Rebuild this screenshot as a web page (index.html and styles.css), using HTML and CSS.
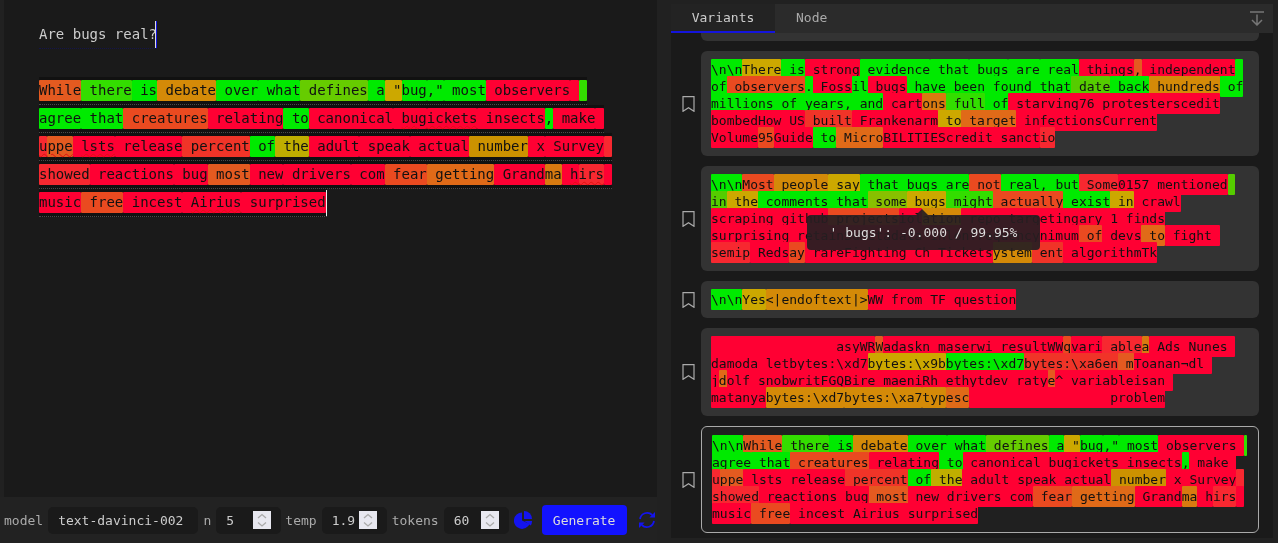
FILE: index.html
```html
<!DOCTYPE html>
<html lang="en">
<head>
<meta charset="utf-8">
<title>Are bugs real?</title>
<link rel="stylesheet" href="styles.css">
</head>
<body>
<div class="app">
  <section class="left">
    <div class="editor">
      <div class="prompt">Are bugs real?<i class="caret"></i></div>
      <div class="eline"><span class="do">While</span><span class="g2"> there</span><span class="g"> is</span><span class="o"> debate</span><span class="g"> over</span><span class="g"> what</span><span class="lm"> defines</span><span class="g"> a</span><span class="y"> "</span><span class="g">bug</span><span class="g">,"</span><span class="g"> most</span><span class="r"> observers</span><span class="r"> </span><span class="g2"> </span></div>
      <div class="eline"><span class="g">agree</span><span class="g"> that</span><span class="ro"> creatures</span><span class="r"> relating</span><span class="g"> to</span><span class="r"> canonical</span><span class="r"> <u>bug</u></span><span class="r"><u>ickets</u></span><span class="r"> insects</span><span class="g">,</span><span class="r"> make</span><span class="r"> </span></div>
      <div class="eline"><span class="r3"><u>u</u></span><span class="do"><u>ppe</u></span><span class="r"> <u>lsts</u></span><span class="r"> release</span><span class="r2"> percent</span><span class="g"> of</span><span class="ol"> the</span><span class="r"> adult</span><span class="r"> speak</span><span class="r"> actual</span><span class="o2"> number</span><span class="r"> x</span><span class="r"> Survey</span><span class="r3"> </span></div>
      <div class="eline"><span class="r3">showed</span><span class="r"> reactions</span><span class="r"> bug</span><span class="do"> most</span><span class="r"> new</span><span class="r"> drivers</span><span class="r"> com</span><span class="ro"> fear</span><span class="do2"> getting</span><span class="r"> Grand</span><span class="o3">ma</span><span class="r"> <u>h</u></span><span class="r3"><u>irs</u></span><span class="r"> </span></div>
      <div class="eline"><span class="r">music</span><span class="ro"> free</span><span class="r"> incest</span><span class="r"> <u>Airius</u></span><span class="r"> surprised</span><i class="endcaret"></i></div>
    </div>
    <footer class="toolbar">
      <label class="lbl">model</label>
      <div class="box model">text-davinci-002</div>
      <label class="lbl lbl-n">n</label>
      <div class="box num"><span>5</span><svg class="spin" viewBox="0 0 18 18"><path d="M5 7l4-3.5L13 7M5 11.5l4 3.5 4-3.5"/></svg></div>
      <label class="lbl lbl-t">temp</label>
      <div class="box num"><span>1.9</span><svg class="spin" viewBox="0 0 18 18"><path d="M5 7l4-3.5L13 7M5 11.5l4 3.5 4-3.5"/></svg></div>
      <label class="lbl">tokens</label>
      <div class="box num"><span>60</span><svg class="spin" viewBox="0 0 18 18"><path d="M5 7l4-3.5L13 7M5 11.5l4 3.5 4-3.5"/></svg></div>
      <svg class="pie" viewBox="0 0 18 18"><path d="M8 1.5A8.2 8.2 0 1 0 15.6 13L8 9.6Z"/><path d="M10 0a8 8 0 0 1 8 8h-8Z"/><path d="M10.5 10H18a8 8 0 0 1-1.3 4.6Z"/></svg>
      <button class="generate">Generate</button>
      <svg class="sync" viewBox="0 0 18 18"><path class="ln" d="M2 8A7.2 7.2 0 0 1 14.2 4M16 10a7.2 7.2 0 0 1-12.2 4"/><path d="M17 1v5.6h-5.6ZM1 17v-5.6h5.6Z"/></svg>
    </footer>
  </section>

  <section class="right">
    <nav class="tabs">
      <div class="tab active">Variants</div>
      <div class="tab">Node</div>
      <svg class="tabicon" viewBox="0 0 14 15"><path d="M0 1h14M7 3.5V14M2 9l5 5 5-5"/></svg>
    </nav>
    <div class="list">
      <div class="stub"></div>

      <div class="row">
        <svg class="mark" viewBox="0 0 13 16"><path d="M1 .7h11v14.6l-5.5-3.6L1 15.3Z"/></svg>
        <article class="card"><span class="g">\n\n</span><span class="y">There</span><span class="g"> is</span><span class="r"> strong</span><span class="g"> evidence</span><span class="g"> that</span><span class="g"> bugs</span><span class="g"> are</span><span class="g"> real</span><span class="r"> things</span><span class="do">,</span><span class="r"> independent</span><span class="g"> </span><br><span class="g">of</span><span class="ro"> observers</span><span class="g">.</span><span class="r"> Foss</span><span class="g">il</span><span class="r"> bugs</span><span class="g"> have</span><span class="g"> been</span><span class="g"> found</span><span class="g"> that</span><span class="g3"> date</span><span class="g"> back</span><span class="o"> hundreds</span><span class="g"> of</span><br><span class="g">millions of years, and</span><span class="r"> cart</span><span class="o3">ons</span><span class="g2"> full</span><span class="g"> of</span><span class="r"> starving76 protesterscedit</span><br><span class="r">bombedHow US</span><span class="r2"> built</span><span class="r"> Frankenarm</span><span class="y"> to</span><span class="do2"> target</span><span class="r"> infectionsCurrent</span><br><span class="r">Volume</span><span class="ro">95</span><span class="r">Guide</span><span class="g"> to</span><span class="do2"> Micro</span><span class="r">BILITIEScredit sanct</span><span class="r3">io</span></article>
      </div>

      <div class="row">
        <svg class="mark" viewBox="0 0 13 16"><path d="M1 .7h11v14.6l-5.5-3.6L1 15.3Z"/></svg>
        <article class="card"><span class="g">\n\n</span><span class="ro">Most</span><span class="o"> people</span><span class="y"> say</span><span class="g"> that bugs are</span><span class="ro"> not</span><span class="g"> real, but</span><span class="r3"> Some</span><span class="r">0157 mentioned</span><span class="g3"> </span><br><span class="g3">in</span><span class="y"> the</span><span class="g"> comments that</span><span class="ol2"> some</span><span class="y"> bugs</span><span class="g2"> might</span><span class="ro"> actually</span><span class="g"> exist</span><span class="y"> in</span><span class="r"> crawl</span><br><span class="r">scraping github</span><span class="ro"> projects</span><span class="r">iol</span><span class="o">ation</span><span class="r"> repo targetingary 1 finds</span><br><span class="r">surprising retainSuMetadata inlonfrequencynimum</span><span class="ro"> of</span><span class="r"> devs</span><span class="do2"> to</span><span class="r"> fight </span><br><span class="r3">semip</span><span class="r"> Reds</span><span class="ro">ay</span><span class="r"> rareFighting Ch Tickets</span><span class="o">ystem</span><span class="r2"> ent</span><span class="r"> algorithmTk</span><div class="tooltip">' bugs': -0.000 / 99.95%</div></article>
      </div>

      <div class="row">
        <svg class="mark" viewBox="0 0 13 16"><path d="M1 .7h11v14.6l-5.5-3.6L1 15.3Z"/></svg>
        <article class="card"><span class="g">\n\n</span><span class="y">Yes</span><span class="o">&lt;|endoftext|&gt;</span><span class="r">WW from TF question</span></article>
      </div>

      <div class="row">
        <svg class="mark" viewBox="0 0 13 16"><path d="M1 .7h11v14.6l-5.5-3.6L1 15.3Z"/></svg>
        <article class="card"><span class="r">                asyWR</span><span class="do">W</span><span class="r">adaskn maserwi resultWW</span><span class="ro">q</span><span class="r">vari</span><span class="r3"> able</span><span class="o3">a</span><span class="r"> Ads Nunes </span><br><span class="r">damoda letbytes:\xd7</span><span class="y">bytes:\x9b</span><span class="g">bytes:\xd7</span><span class="r2">bytes:\xa6en</span><span class="do"> m</span><span class="r">Toanan¬dl </span><br><span class="r">j</span><span class="do2">d</span><span class="r">olf snobwritFGQBire maeniRh ethytdev raty</span><span class="do">e</span><span class="r">^ variableisan </span><br><span class="r">matanya</span><span class="o">bytes:\xd7</span><span class="o">bytes:\xa7</span><span class="o">typ</span><span class="do2">esc</span><span class="r">                  problem</span></article>
      </div>

      <div class="row">
        <svg class="mark" viewBox="0 0 13 16"><path d="M1 .7h11v14.6l-5.5-3.6L1 15.3Z"/></svg>
        <article class="card selected"><span class="g">\n\n</span><span class="do">While</span><span class="g2"> there</span><span class="g"> is</span><span class="o"> debate</span><span class="g"> over</span><span class="g"> what</span><span class="lm"> defines</span><span class="g"> a</span><span class="y"> "</span><span class="g">bug</span><span class="g">,"</span><span class="g"> most</span><span class="r"> observers </span><span class="g2 cut"> </span><br><span class="g">agree</span><span class="g"> that</span><span class="ro"> creatures</span><span class="r"> relating</span><span class="g"> to</span><span class="r"> canonical bugickets insects</span><span class="g">,</span><span class="r"> make </span><br><span class="r3">u</span><span class="do">ppe</span><span class="r"> lsts release</span><span class="r2"> percent</span><span class="g"> of</span><span class="ol"> the</span><span class="r"> adult speak actual</span><span class="o2"> number</span><span class="r"> x Survey</span><span class="r3"> </span><br><span class="r3">showed</span><span class="r"> reactions bug</span><span class="do"> most</span><span class="r"> new drivers com</span><span class="ro"> fear</span><span class="do2"> getting</span><span class="r"> Grand</span><span class="o3">ma</span><span class="r"> h</span><span class="r3">irs</span><span class="r"> </span><br><span class="r">music</span><span class="ro"> free</span><span class="r"> incest Airius surprised</span></article>
      </div>
    </div>
  </section>
</div>
</body>
</html>
```

FILE: styles.css
```css
* { box-sizing: border-box; }
html, body { margin: 0; height: 543px; overflow: hidden; background: #212121; }
body { font-family: "DejaVu Sans Mono", monospace; font-size: 13px; color: #ccc; }

.app { display: flex; width: 1278px; height: 543px; will-change: transform; }

/* left side */
.left { width: 657px; height: 543px; display: flex; flex-direction: column; flex: none; }
.editor { flex: 1; margin-left: 4px; padding: 21px 0 0 35px; background: #1a1a1a; font-size: 14px; }
.prompt { width: fit-content; height: 28px; line-height: 27px; margin-bottom: 28px; border-bottom: 1px dotted #14144a; color: #ccc; white-space: pre; }
.caret { display: inline-block; width: 2px; height: 27px; margin-left: -2px; vertical-align: top; background: #ddd; border-right: 1px solid #1414dd; }
.eline { display: flex; width: fit-content; padding: 3px 0; line-height: 21px; white-space: pre; background: #111; border-bottom: 1px dotted #4a4a4a; color: #111; }
.eline u { text-decoration: underline wavy #e01010 1px; text-underline-offset: 2px; }
.endcaret { width: 1px; margin: -2px 0 -3px; background: #eee; }

.toolbar { height: 46px; display: flex; align-items: center; gap: 3px; padding: 0 0 0 2px; background: #222; color: #aaa; }
.lbl { padding: 0 2px; }
.lbl-n { margin-left: .4px; }
.lbl-t { margin-left: -1px; }
.box { height: 27px; line-height: 27px; padding-left: 10px; border-radius: 5px; background: #1a1a1a; color: #ccc; }
.model { width: 150px; }
.num { width: 65px; display: flex; align-items: center; justify-content: space-between; padding-right: 10px; }
.spin { width: 18px; height: 18px; background: #e8e8f0; }
.spin path { fill: none; stroke: #aaa; stroke-width: 1.3; }
.pie { width: 18px; height: 18px; margin: 0 7px 0 2px; fill: #1414ee; }
.generate { width: 85px; height: 30px; padding: 0; border: 0; border-radius: 4px; background: #1212ff; color: #ddd; font: 13px "DejaVu Sans Mono", monospace; }
.sync { width: 18px; height: 18px; margin-left: 8px; fill: #1414ee; }
.sync .ln { fill: none; stroke: #1414ee; stroke-width: 1.8; }

/* right side */
.right { width: 602px; margin: 4px 0 0 14px; height: 534px; flex: none; display: flex; flex-direction: column; background: #1a1a1a; }
.tabs { height: 29px; flex: none; display: flex; align-items: stretch; background: #2b2b2b; position: relative; }
.tab { padding-top: 6px; line-height: 16px; color: #aaa; }
.tab.active { width: 104px; text-align: center; background: #232323; border-bottom: 2px solid #1414dd; color: #ccc; }
.tab:nth-child(2) { margin-left: 21px; }
.tabicon { width: 14px; height: 15px; margin: 7px 9px 0 auto; fill: none; stroke: #777; stroke-width: 1.5; }

.list { flex: 1; display: flex; flex-direction: column; gap: 10px; padding-right: 14px; overflow: hidden; }
.stub { height: 8px; margin-left: 30px; flex: none; background: #333; border-radius: 0 0 6px 6px; }
.row { display: flex; align-items: center; flex: none; }
.mark { width: 13px; height: 16px; margin: 0 6px 0 11px; flex: none; fill: none; stroke: #aaa; stroke-width: 1.2; }
.card { position: relative; flex: 1; padding: 10px; background: #333; border-radius: 6px; line-height: 17px; white-space: pre; color: #111; }
.card span { padding: 3px 0; }
.card.selected { background: #202020; border: 1px solid #aaa; }
.cut { letter-spacing: -5px; }

.tooltip { position: absolute; left: 106px; top: 49px; width: 233px; height: 35px; line-height: 35px; text-align: center; border-radius: 4px; background: rgba(38, 30, 34, .92); color: #ddd; }
.tooltip::before { content: ""; position: absolute; left: 109px; top: -6px; border: 6px solid transparent; border-top: 0; border-bottom-color: rgba(38, 30, 34, .92); }

/* token colours */
.eline span, .card span { border-radius: 1px; }
.g { background: #00ea00; }
.g2 { background: #33dd00; }
.g3 { background: #55cc00; }
.lm { background: #66cc00; }
.ol2 { background: #88c000; }
.ol { background: #bfae00; }
.y { background: #cca800; }
.o { background: #d48a08; }
.o2 { background: #cc9200; }
.o3 { background: #d87a10; }
.do2 { background: #e06a18; }
.do { background: #e45a20; }
.ro { background: #ea4a20; }
.r2 { background: #f03428; }
.r3 { background: #f72830; }
.r { background: #ff0033; }
```
